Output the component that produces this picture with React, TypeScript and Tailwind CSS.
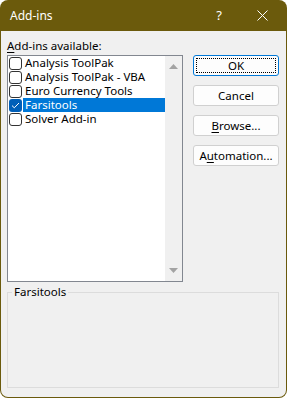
const items = [
  { name: "Analysis ToolPak", checked: false },
  { name: "Analysis ToolPak - VBA", checked: false },
  { name: "Euro Currency Tools", checked: false },
  { name: "Farsitools", checked: true },
  { name: "Solver Add-in", checked: false },
];

function Checkbox({ checked }: { checked: boolean }) {
  if (checked) {
    return (
      <span className="flex h-[13px] w-[13px] shrink-0 items-center justify-center rounded-[3px] bg-[#005fb8]">
        <svg width="9" height="7" viewBox="0 0 9 7" fill="none">
          <path d="M1 3.6 L3.3 5.8 L8 1" stroke="#fff" strokeWidth="1" />
        </svg>
      </span>
    );
  }
  return (
    <span className="h-[13px] w-[13px] shrink-0 rounded-[3px] border border-[#333] bg-white" />
  );
}

function Btn({ children, focused }: { children: React.ReactNode; focused?: boolean }) {
  return (
    <button
      className={
        "relative flex h-[21px] w-[86px] items-center justify-center rounded-[3px] border bg-[#fdfdfd] text-[11.5px] text-black " +
        (focused ? "border-[#0078d7]" : "border-[#d0d0d0]")
      }
    >
      {focused && (
        <span className="absolute inset-[2px] border border-dotted border-black" />
      )}
      <span className="relative leading-[14px]">{children}</span>
    </button>
  );
}

export default function App() {
  return (
    <div
      className="flex h-[398px] w-[287px] flex-col overflow-hidden rounded-[8px] bg-[#6b5a0c] px-px pb-px"
      style={{ fontFamily: '"Noto Sans", "Liberation Sans", sans-serif' }}
    >
      <div className="flex h-[31px] shrink-0 items-center pl-[9px] text-white">
        <span className="text-[12px]">Add-ins</span>
        <span className="ml-auto mr-[35px] text-[13px]">?</span>
        <svg width="11" height="11" viewBox="0 0 11 11" className="mr-[18px]">
          <path d="M0.5 0.5 L10.5 10.5 M10.5 0.5 L0.5 10.5" stroke="#fff" strokeWidth="1" />
        </svg>
      </div>
      <div className="flex flex-1 flex-col rounded-b-[7px] bg-[#f0f0f0] px-[6px]">
        <div className="mt-[6px] h-[18px] text-[11.5px] leading-[18px] text-black">
          <span className="underline underline-offset-2">A</span>dd-ins available:
        </div>
        <div className="flex gap-[10px]">
          <div className="flex h-[227px] w-[176px] border border-[#828790] bg-white">
            <div className="flex flex-1 flex-col">
              {items.map((it) => (
                <div key={it.name} className="flex h-[14px] items-center pl-px">
                  <Checkbox checked={it.checked} />
                  <span
                    className={
                      "ml-px flex h-[14px] flex-1 items-center pl-[2px] text-[11.5px] leading-[14px] " +
                      (it.checked ? "bg-[#0078d7] text-white" : "text-black")
                    }
                  >
                    {it.name}
                  </span>
                </div>
              ))}
            </div>
            <div className="flex w-[17px] flex-col items-center justify-between bg-[#f0f0f0] py-[8px]">
              <svg width="9" height="5" viewBox="0 0 9 5">
                <path d="M0 5 L4.5 0 L9 5 Z" fill="#a3a3a3" />
              </svg>
              <svg width="9" height="5" viewBox="0 0 9 5">
                <path d="M0 0 L9 0 L4.5 5 Z" fill="#a3a3a3" />
              </svg>
            </div>
          </div>
          <div className="flex flex-col gap-[9px]">
            <Btn focused>OK</Btn>
            <Btn>Cancel</Btn>
            <Btn>
              <span className="underline underline-offset-2">B</span>rowse...
            </Btn>
            <Btn>
              A<span className="underline underline-offset-2">u</span>tomation...
            </Btn>
          </div>
        </div>
        <div className="relative mt-[10px] h-[96px] w-[272px] border border-[#dcdcdc]">
          <span className="absolute left-[4px] top-[-9px] bg-[#f0f0f0] px-[2px] text-[11.5px] leading-[16px] text-black">
            Farsitools
          </span>
        </div>
      </div>
    </div>
  );
}
